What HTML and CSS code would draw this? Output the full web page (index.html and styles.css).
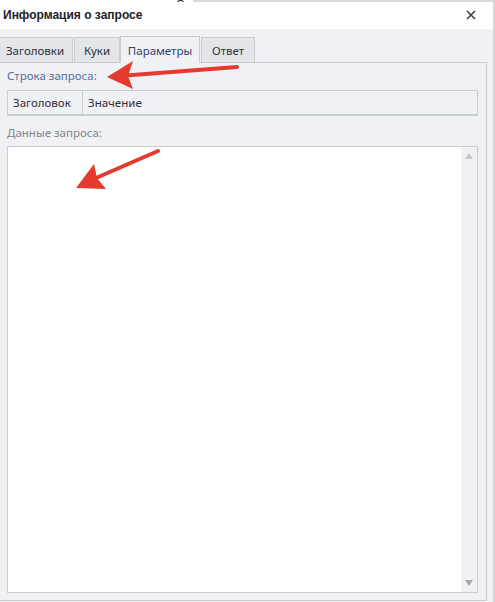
FILE: index.html
```html
<!DOCTYPE html>
<html lang="ru">
<head>
<meta charset="utf-8">
<title>Информация о запросе</title>
<link rel="stylesheet" href="styles.css">
</head>
<body>
<div class="window">
  <div class="topstrip">
    <span class="ts-left"><svg class="caret" width="7" height="3" viewBox="0 0 7 3"><path d="M0.5 3L3.5 0.3L6.5 3" fill="none" stroke="#333" stroke-width="1.2"/></svg></span>
    <span class="ts-right"></span>
  </div>
  <div class="titlebar">
    <span class="title">Информация о запросе</span>
    <svg class="close" width="10" height="10" viewBox="0 0 10 10"><path d="M1 1L9 9M9 1L1 9" stroke="#3c4048" stroke-width="1.6"/></svg>
  </div>
  <div class="body">
    <div class="tabs">
      <div class="tab t1">Заголовки</div>
      <div class="tab t2">Куки</div>
      <div class="tab t3 active">Параметры</div>
      <div class="tab t4">Ответ</div>
    </div>
    <div class="panel">
      <div class="label link">Строка запроса:</div>
      <div class="grid-head">
        <div class="col c1">Заголовок</div>
        <div class="col c2">Значение</div>
      </div>
      <div class="label muted">Данные запроса:</div>
      <div class="textarea">
        <div class="text"></div>
        <div class="scrollbar">
          <span class="arr up"></span>
          <span class="arr down"></span>
        </div>
      </div>
    </div>
  </div>
  <svg class="annot" width="495" height="602" viewBox="0 0 495 602">
    <line x1="237" y1="67" x2="126" y2="75.5" stroke="#e53a30" stroke-width="4" stroke-linecap="round"/>
    <polygon points="107,77 133,61 128,76 133,89" fill="#e53a30"/>
    <line x1="158" y1="151" x2="96" y2="178" stroke="#e53a30" stroke-width="4" stroke-linecap="round"/>
    <polygon points="76,188 94,164 97,178 106,189" fill="#e53a30"/>
  </svg>
</div>
</body>
</html>
```

FILE: styles.css
```css
* { box-sizing: border-box; }
html, body { margin: 0; padding: 0; }
body {
  background: #f0f1f5;
  font-family: "Noto Sans", "Open Sans", sans-serif;
  font-size: 11.5px;
  color: #2a2d33;
}
.window {
  position: relative;
  width: 495px;
  height: 602px;
  border-right: 2px solid #d4d6db;
  background: #f0f1f5;
  overflow: hidden;
}
.topstrip {
  display: flex;
  height: 2px;
  overflow: hidden;
}
.ts-left {
  width: 193px;
  background: #ffffff;
  position: relative;
}
.caret {
  position: absolute;
  left: 177px;
  top: -1px;
}
.ts-right {
  flex: 1;
  background: #d8d9dc;
}
.titlebar {
  height: 27px;
  background: #ffffff;
  display: flex;
  align-items: center;
  justify-content: space-between;
  padding: 0 17px 1px 3px;
}
.title {
  font-family: "Liberation Sans", Arial, sans-serif;
  font-weight: bold;
  font-size: 12px;
  color: #1e2126;
}
.close { display: block; }
.body {
  padding-top: 7px;
}
.tabs {
  display: flex;
  height: 26px;
  align-items: flex-end;
  position: relative;
  z-index: 1;
}
.tab {
  height: 25px;
  display: flex;
  align-items: center;
  justify-content: center;
  background: #e3e5ea;
  border: 1px solid #c9ccd3;
  border-bottom: none;
  color: #2e3238;
  margin-right: 1px;
}
.t1 { width: 73px; border-left: none; padding-right: 2px; }
.t2 { width: 46px; }
.t3 { width: 80px; }
.t4 { width: 54px; }
.tab.active {
  height: 27px;
  margin-bottom: -1px;
  background: #f0f1f5;
  color: #34406a;
  margin-left: -1px;
}
.panel {
  width: 487px;
  height: 539px;
  border: 1px solid #c9ccd3;
  border-left: none;
  padding: 5px 8px 7px 7px;
  display: flex;
  flex-direction: column;
}
.label {
  height: 16px;
  line-height: 16px;
}
.link { color: #5a6a9c; margin-bottom: 6px; }
.muted { color: #808389; margin-bottom: 5px; }
.grid-head {
  display: flex;
  flex: none;
  height: 26px;
  border: 1px solid #c9ccd3;
  border-bottom: 2px solid #c9ccd3;
  margin-bottom: 9px;
}
.col {
  display: flex;
  align-items: center;
  color: #2a2d33;
}
.c1 {
  width: 75px;
  padding-left: 5px;
  border-right: 1px solid #c9ccd3;
}
.c2 { padding-left: 5px; flex: 1; }
.textarea {
  flex: 1;
  display: flex;
  background: #ffffff;
  border: 1px solid #c9ccd3;
}
.text { flex: 1; }
.scrollbar {
  width: 16px;
  background: #f0f1f5;
  display: flex;
  flex-direction: column;
  justify-content: space-between;
  align-items: center;
  padding: 6px 0 6px;
}
.arr {
  width: 0;
  height: 0;
  border-left: 4px solid transparent;
  border-right: 4px solid transparent;
}
.up { border-bottom: 6px solid #c4c6ca; }
.down { border-top: 6px solid #a4a6aa; }
.annot {
  position: absolute;
  left: 0;
  top: 0;
  pointer-events: none;
  z-index: 5;
}
```
